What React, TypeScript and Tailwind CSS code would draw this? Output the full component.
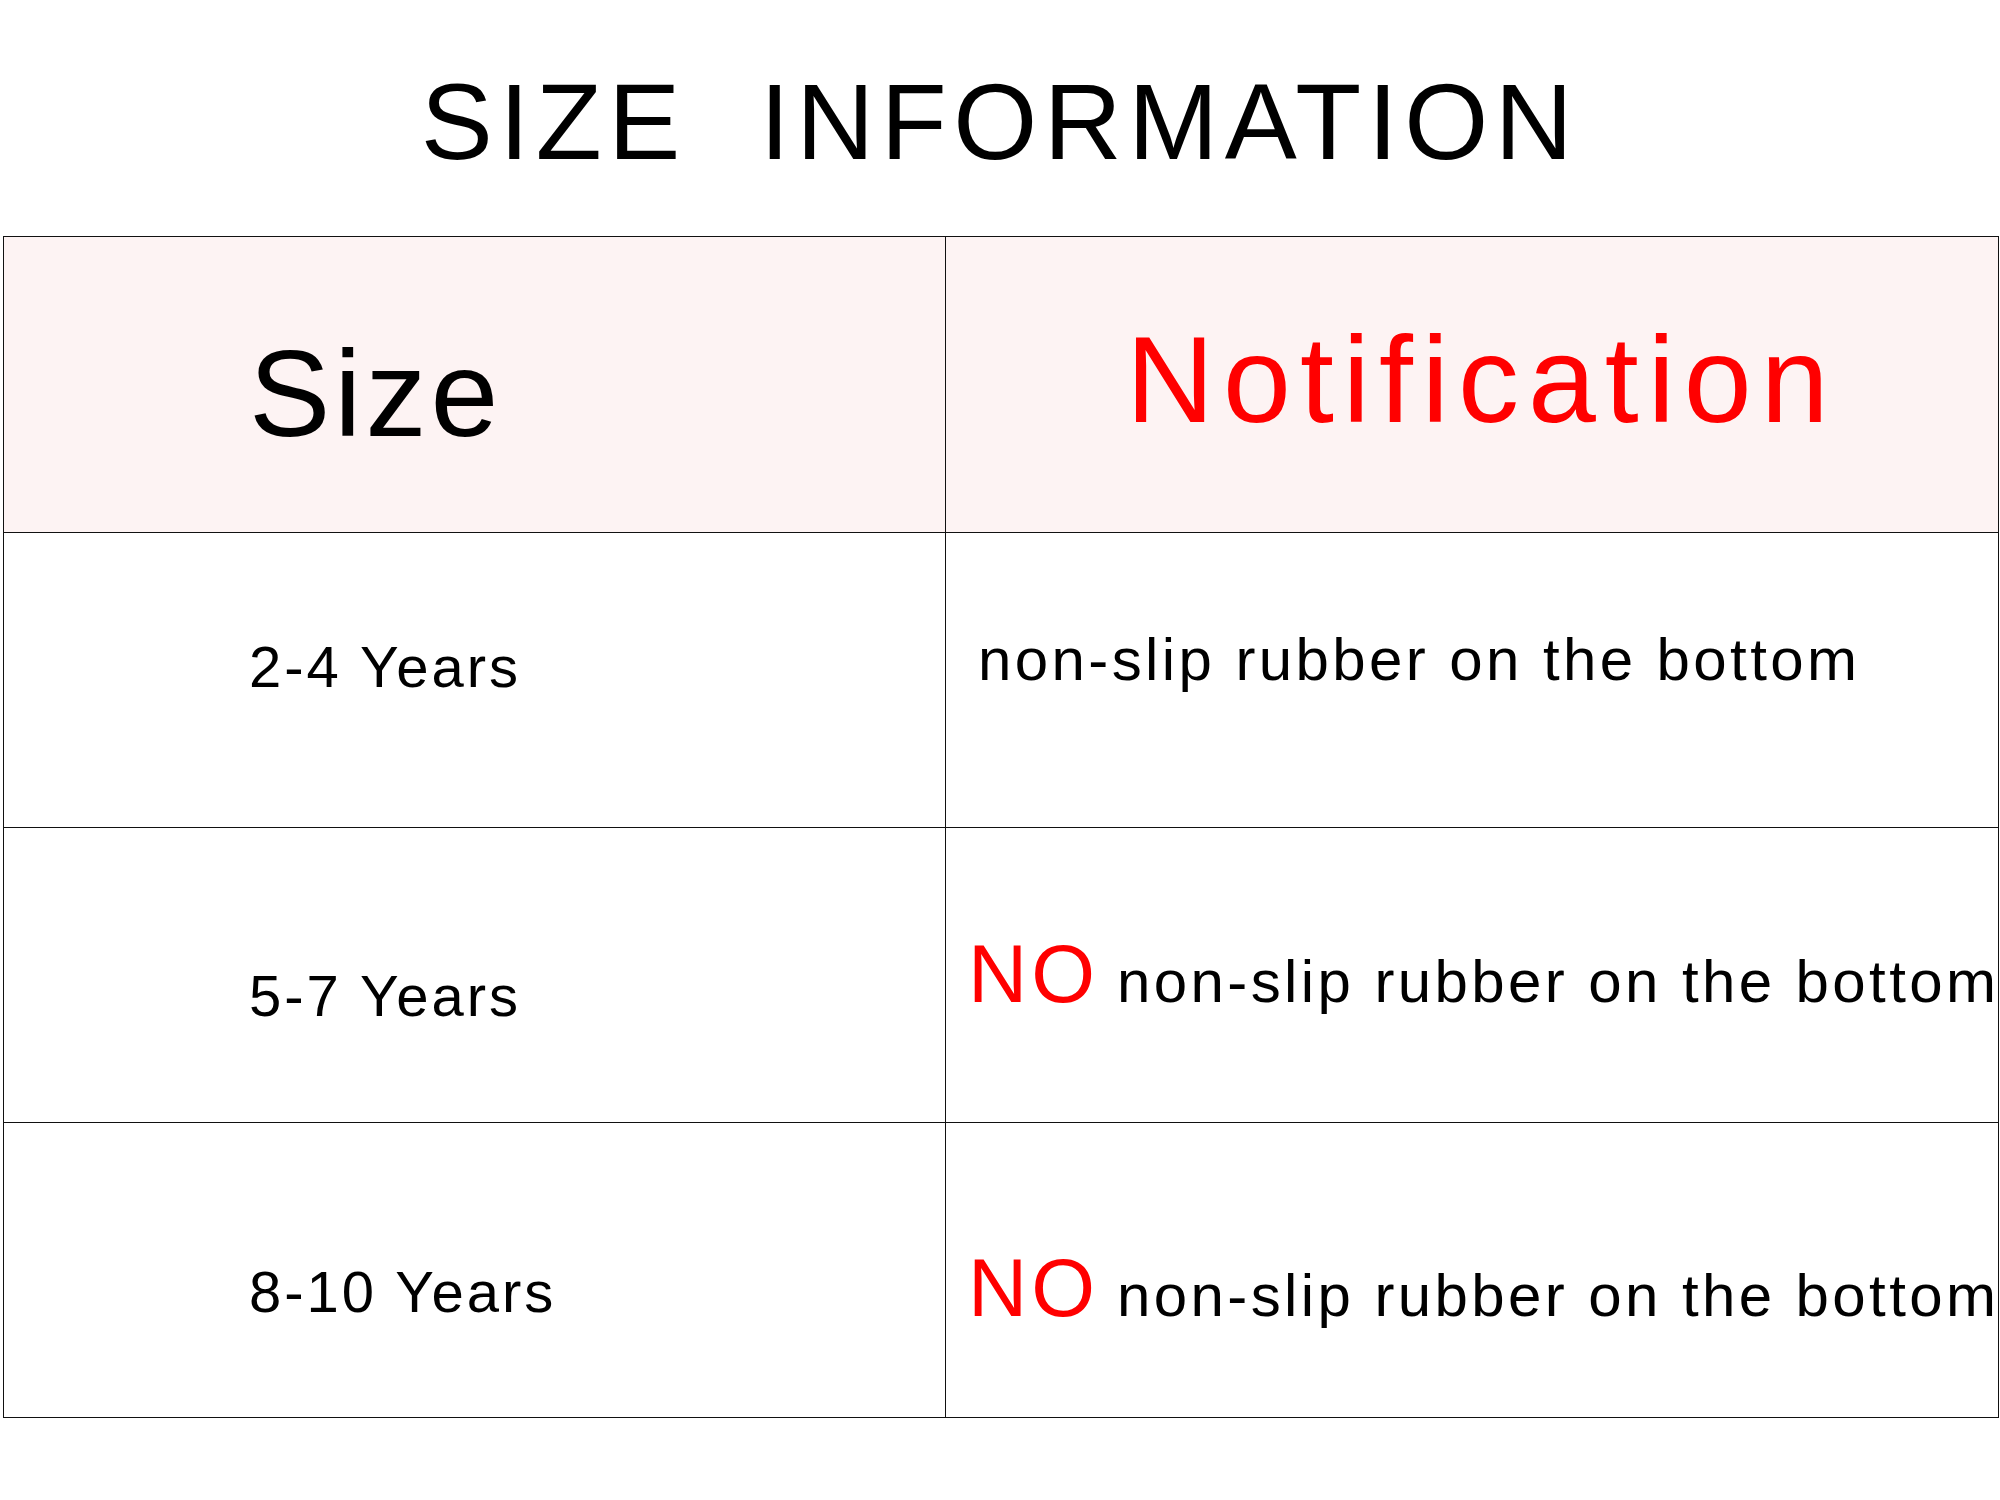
const font = { fontFamily: '"Liberation Sans", Arial, Helvetica, sans-serif' }

const rows = [
  { label: "2-4 Years", no: false, labelPad: "pt-[105px]", notePad: "pt-[97px]" },
  { label: "5-7 Years", no: true, labelPad: "pt-[139px]", notePad: "pt-[105px]" },
  { label: "8-10 Years", no: true, labelPad: "pt-[140px]", notePad: "pt-[124px]" },
]

function RubberNote({ no }: { no: boolean }) {
  if (!no) {
    return (
      <div className="pl-[32px] text-[60px] leading-none tracking-[3.4px] text-black whitespace-nowrap">
        non-slip rubber on the bottom
      </div>
    )
  }
  return (
    <div className="flex items-baseline pl-[22px] whitespace-nowrap">
      <span className="text-[82px] leading-none tracking-[4px] text-[#ff0000]">NO</span>
      <span className="ml-[18px] text-[60px] leading-none tracking-[3.4px] text-black">
        non-slip rubber on the bottom
      </span>
    </div>
  )
}

export default function App() {
  return (
    <div className="w-[2000px] h-[1500px] bg-white overflow-hidden" style={font}>
      {/* Title */}
      <div className="pt-[68px] text-center">
        <h1 className="text-[108px] leading-none tracking-[6.5px] text-black font-normal whitespace-pre">
          {"SIZE  INFORMATION"}
        </h1>
      </div>

      {/* Table */}
      <div className="mt-[60px] ml-[3px] w-[1996px] border-l border-t border-[#111]">
        {/* Header row */}
        <div className="flex h-[296px] bg-[#fdf3f3]">
          <div className="w-[942px] shrink-0 border-r border-b border-[#111] pt-[96px] pl-[245px]">
            <span className="text-[122px] leading-none tracking-[4px] text-black">Size</span>
          </div>
          <div className="flex-1 border-r border-b border-[#111] pt-[82px] pl-[180px]">
            <span className="text-[122px] leading-none tracking-[9px] text-[#ff0000] whitespace-nowrap">
              Notification
            </span>
          </div>
        </div>

        {rows.map((row) => (
          <div key={row.label} className="flex h-[295px]">
            <div className={`w-[942px] shrink-0 border-r border-b border-[#111] pl-[245px] ${row.labelPad}`}>
              <span className="text-[58px] leading-none tracking-[3px] text-black">{row.label}</span>
            </div>
            <div className={`flex-1 border-r border-b border-[#111] overflow-hidden ${row.notePad}`}>
              <RubberNote no={row.no} />
            </div>
          </div>
        ))}
      </div>
    </div>
  )
}
